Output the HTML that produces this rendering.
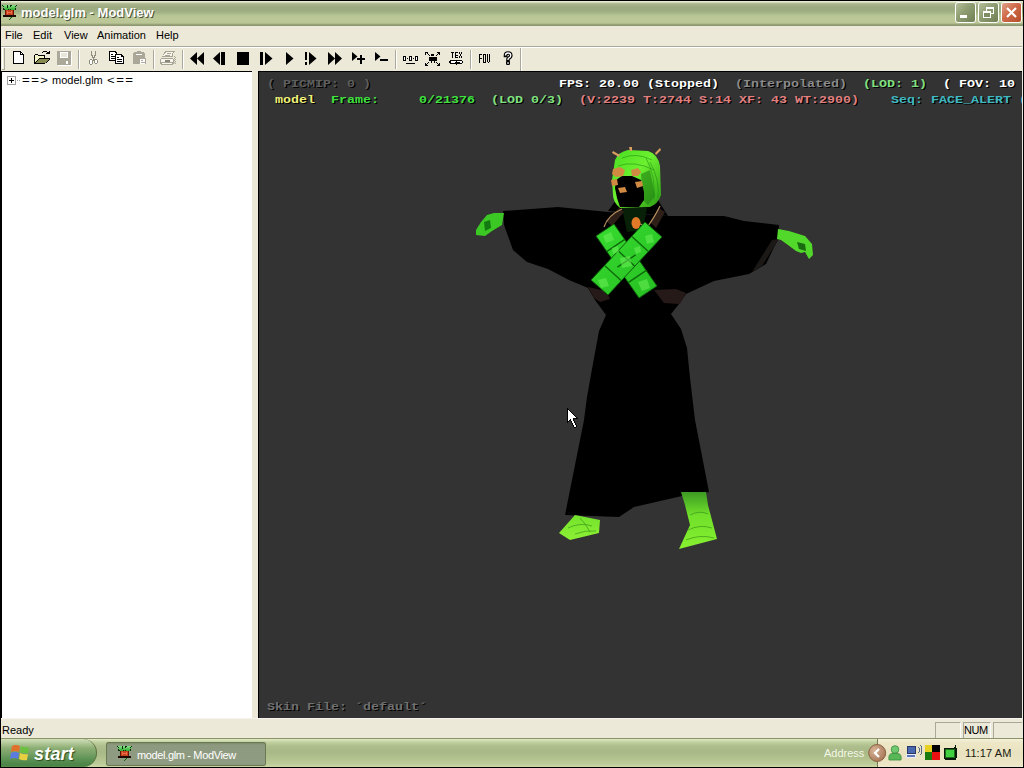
<!DOCTYPE html>
<html><head><meta charset="utf-8">
<style>
*{margin:0;padding:0;box-sizing:border-box}
html,body{width:1024px;height:768px;overflow:hidden;background:#000;position:relative;font-family:"Liberation Sans",sans-serif}
.a{position:absolute}
#title{left:1px;top:1px;width:1022px;height:25px;
 background:linear-gradient(to bottom,#e6edd0 0px,#e6edd0 1px,#bcc4a0 2px,#a9b48c 3px,#9eab81 6px,#9dac80 9px,#a5b587 12px,#b6c493 14px,#bcc898 18px,#bac696 22px,#a4ae84 23px,#8c9870 24px,#8c9870 25px)}
#ttext{left:21px;top:5px;font:bold 13px "Liberation Sans",sans-serif;color:#fff;text-shadow:1px 1px 0 #4a5238;white-space:nowrap}
.cb{top:2px;width:21px;height:21px;border:1px solid #fff;border-radius:3px;background:linear-gradient(135deg,#b4c09a 0%,#8e9c72 45%,#6f7e52 100%)}
#menu{left:1px;top:26px;width:1022px;height:20px;background:#ece9d8}
.mi{font-size:11px;color:#000;white-space:nowrap}
#tbar{left:1px;top:46px;width:1022px;height:25px;background:#ece9d8;border-top:1px solid #aca899}
#tbarhl{left:1px;top:47px;width:1022px;height:1px;background:#fff}
#tree{left:1px;top:71px;width:251px;height:647px;background:#fff;border-top:1px solid #000;border-left:1px solid #000}
#split{left:252px;top:71px;width:6px;height:647px;background:#ece9d8}
#view{left:258px;top:71px;width:764px;height:647px;background:#333;border-top:1px solid #000;border-left:1px solid #000}
#rcol{left:1022px;top:26px;width:1px;height:712px;background:#ece9d8}
#status{left:1px;top:718px;width:1022px;height:20px;background:#ece9d8}
#task{left:1px;top:738px;width:1023px;height:29px;background:linear-gradient(to bottom,#9aa672 0,#d6dcb8 1px,#c3cfa0 3px,#b8c592 8px,#b2c08c 20px,#a9b582 29px)}
.q{position:absolute;font:bold 11px "Liberation Mono",monospace;white-space:pre;transform-origin:0 0;transform:scaleX(1.212);text-shadow:1px 1px 0 #000}
</style></head><body>
<div id="title" class="a"></div>
<svg class="a" style="left:0;top:0" width="20" height="22" viewBox="0 0 20 22" shape-rendering="crispEdges">
<defs><linearGradient id="ig" x1="0" y1="0" x2="0" y2="1"><stop offset="0" stop-color="#8ae48a"/><stop offset="1" stop-color="#2aa82a"/></linearGradient></defs>
<path d="M2 5h15v2h-1v3h-12v-3h-2z" fill="url(#ig)"/>
<path d="M2 5h1v1h1v1h-1v-1h-1z M7 5h1v3h-1z M10 5h2v1h-1v1h-1z M16 5h1v1h-1v1h-1v-1h1z M3 8h1v2h-1z M4 9h1v1h-1z M8 9h1v1h-1z M10 9h1v1h-1z M15 8h1v2h-1z" fill="#0a2a0a"/>
<rect x="5" y="10" width="9" height="5" fill="#c8401c"/>
<path d="M5 10h1v5h-1z M13 10h1v5h-1z" fill="#6a1606"/>
<path d="M7 11h1v3h-1z M11 11h1v3h-1z M8 12h3v1h-3z" fill="#e8704a"/>
<rect x="3" y="15" width="13" height="2" fill="#1e0804"/>
<path d="M10 17h2v1h-1v1h-1v1h-1v-1h1z" fill="#1a5a1a"/>
<rect x="10" y="17" width="1" height="1" fill="#50c050"/>
</svg>
<div id="ttext" class="a">model.glm - ModView</div>
<div class="a cb" style="left:955px"><div class="a" style="left:4px;top:12px;width:7px;height:3px;background:#fff"></div></div>
<div class="a cb" style="left:978px"><div class="a" style="left:7px;top:4px;width:8px;height:7px;border:1px solid #fff;border-top-width:2px"></div><div class="a" style="left:4px;top:8px;width:8px;height:7px;border:1px solid #fff;border-top-width:2px;background:#7f8d62"></div></div>
<div class="a cb" style="left:1001px;background:linear-gradient(135deg,#e0a08a 0%,#cf6a48 45%,#b4502c 100%)">
<svg class="a" style="left:0;top:0" width="19" height="19" viewBox="0 0 19 19"><path d="M5 5L14 14M14 5L5 14" stroke="#fff" stroke-width="2.2"/></svg></div>
<div id="menu" class="a"></div>
<div class="a mi" style="left:5px;top:29px">File</div>
<div class="a mi" style="left:33px;top:29px">Edit</div>
<div class="a mi" style="left:64px;top:29px">View</div>
<div class="a mi" style="left:97px;top:29px">Animation</div>
<div class="a mi" style="left:156px;top:29px">Help</div>
<div id="tbar" class="a"></div>
<div id="tbarhl" class="a"></div>
<svg class="a" style="left:0;top:44px" width="540" height="28" viewBox="0 44 540 28" shape-rendering="crispEdges">
<!-- gripper -->
<rect x="2" y="48" width="1" height="22" fill="#fff"/>
<rect x="4" y="48" width="1" height="22" fill="#aca899"/>
<rect x="2" y="69" width="3" height="1" fill="#aca899"/>
<!-- new -->
<path d="M13 51H21L24 54V64H13Z" fill="#fff"/>
<path d="M13 51h8v1h-7v11h9v-9h1v10h-11z" fill="#000"/>
<path d="M20 51h1v1h1v1h1v1h1v1h-4z" fill="#000"/>
<rect x="21" y="53" width="1" height="1" fill="#fff"/>
<!-- open -->
<path d="M35 55h3v1h7v3h-6l-4 4z" fill="#f5f5c8"/>
<path d="M39 59h10l-4 4h-10z" fill="#878a50"/>
<path d="M34 55h1v8h10v1h-11z M35 54h3v1h-3z M38 55h7v1h-7z M44 56h1v3h-1z M39 58h11v1h-11z" fill="#000"/>
<path d="M38 59h1v1h-1z M37 60h1v1h-1z M36 61h1v1h-1z M35 62h1v1h-1z M49 59h1v1h-1z M48 60h1v1h-1z M47 61h1v1h-1z M46 62h1v1h-1z" fill="#000"/>
<path d="M42 52h1v1h-1z M43 51h4v1h-4z M47 52h1v1h-1z M46 53h4v1h-4z M48 52h2v1h-2z M49 51h1v1h-1z" fill="#000"/>
<!-- save disabled -->
<rect x="57" y="51" width="14" height="14" fill="#aca899"/>
<rect x="60" y="52" width="8" height="6" fill="#fff"/>
<rect x="61" y="53" width="6" height="4" fill="#e8e6d8"/>
<rect x="66" y="61" width="2" height="3" fill="#fff"/>
<rect x="71" y="52" width="1" height="13" fill="#fff"/>
<rect x="58" y="65" width="14" height="1" fill="#fff"/>
<!-- sep -->
<rect x="78" y="50" width="1" height="19" fill="#aca899"/><rect x="79" y="50" width="1" height="19" fill="#fff"/>
<!-- scissors disabled -->
<path d="M91 51h1v4h1v2h1v-2h1v-4h1v5h-1v2h-1v1h-1v-1h-1v-2h-1z" fill="#8f8c80"/>
<path d="M90 59h2v1h1v4h-1v1h-2v-1h-1v-4h1z M95 59h2v1h1v3h-1v1h-2v-1h-1v-3h1z" fill="#8f8c80"/>
<path d="M90 60h2v4h-2z M95 60h2v3h-2z" fill="#fff"/>
<rect x="93" y="59" width="2" height="2" fill="#8f8c80"/>
<!-- copy -->
<path d="M109 51h6l2 2v2h-2v6h-6z" fill="#000"/>
<path d="M110 52h5v1h1v2h-1v5h-5z" fill="#fff"/>
<path d="M111 54h2v1h-2z M111 56h4v1h-4z M111 58h4v1h-4z" fill="#000"/>
<path d="M115 54h6l3 3v7h-9z" fill="#000"/>
<path d="M116 55h5v1h1v1h1v6h-7z" fill="#fff"/>
<rect x="121" y="56" width="1" height="1" fill="#000"/>
<path d="M117 57h2v1h-2z M117 59h5v1h-5z M117 61h5v1h-5z" fill="#000"/>
<!-- paste disabled -->
<path d="M134 52h3v-1h4v1h3v1h1v11h-12v-11h1z" fill="#aca899"/>
<rect x="136" y="54" width="6" height="1" fill="#fff"/>
<path d="M139 58h6l1 1v5h-7z" fill="#aca899"/>
<rect x="140" y="59" width="5" height="5" fill="#fff"/>
<path d="M141 60h2v1h-2z M141 62h4v1h-4z" fill="#aca899"/>
<!-- sep -->
<rect x="153" y="50" width="1" height="19" fill="#aca899"/><rect x="154" y="50" width="1" height="19" fill="#fff"/>
<!-- printer disabled -->
<path d="M165 51h10v1h-1v1h-1v4h-11v-1h1v-2h1v-2h1z" fill="#a8a496"/>
<path d="M166 52h7v1h-1v3h-9v-1h1v-1h1v-1h1z" fill="#f6f5ee"/>
<path d="M167 53h4v1h-4z M165 55h5v1h-5z" fill="#a8a496"/>
<path d="M161 58h12v1h1v5h-1v1h-12v-1h-1v-5h1z" fill="#a8a496"/>
<path d="M161 59h12v1h-12z M161 60h4v2h-4z M170 60h3v2h-3z M162 63h10v1h-10z" fill="#f6f5ee"/>
<path d="M165 60h5v2h-5z" fill="#8a8676"/>
<path d="M174 56h1v1h-1z M175 57h1v1h-1z M174 58h1v1h-1z M175 59h1v1h-1z M174 60h1v1h-1z M175 61h1v1h-1z M174 62h1v1h-1z M175 63h1v1h-1z" fill="#a8a496"/>
<!-- sep -->
<rect x="182" y="50" width="1" height="19" fill="#aca899"/><rect x="183" y="50" width="1" height="19" fill="#fff"/>
<!-- rewind -->
<path d="M190 58.5L197 52V65Z M197 58.5L204 52V65Z" fill="#000" shape-rendering="auto"/>
<!-- step back -->
<path d="M213 58.5L220 52V65Z" fill="#000" shape-rendering="auto"/>
<rect x="221" y="52" width="4" height="13" fill="#000"/>
<!-- stop -->
<rect x="237" y="52" width="12" height="13" fill="#000"/>
<!-- step fwd -->
<rect x="260" y="52" width="3" height="13" fill="#000"/>
<path d="M265 52L272.5 58.5L265 65Z" fill="#000" shape-rendering="auto"/>
<!-- play -->
<path d="M286 52L293.5 58.5L286 65Z" fill="#000" shape-rendering="auto"/>
<!-- !play -->
<rect x="305" y="52" width="2" height="8" fill="#000"/><rect x="305" y="62" width="2" height="3" fill="#000"/>
<path d="M309 52L316.5 58.5L309 65Z" fill="#000" shape-rendering="auto"/>
<!-- ffwd -->
<path d="M328 52L335 58.5L328 65Z M335 52L342 58.5L335 65Z" fill="#000" shape-rendering="auto"/>
<!-- play+ -->
<path d="M352 52L357.5 56.5L352 61Z" fill="#000" shape-rendering="auto"/>
<rect x="357" y="58" width="8" height="2" fill="#000"/><rect x="360" y="55" width="2" height="9" fill="#000"/>
<!-- play- -->
<path d="M375 52L380.5 56.5L375 61Z" fill="#000" shape-rendering="auto"/>
<rect x="380" y="59" width="8" height="2" fill="#000"/>
<!-- sep -->
<rect x="395" y="50" width="1" height="19" fill="#aca899"/><rect x="396" y="50" width="1" height="19" fill="#fff"/>
<!-- 0.0.0 -->
<path d="M403 56h3v5h-3z M409 56h3v5h-3z M415 56h3v5h-3z" fill="#000"/>
<path d="M404 57h1v3h-1z M410 57h1v3h-1z M416 57h1v3h-1z" fill="#fff"/>
<rect x="407" y="58" width="1" height="1" fill="#000"/><rect x="413" y="58" width="1" height="1" fill="#000"/>
<rect x="406" y="63" width="9" height="1" fill="#000"/>
<!-- person arrows -->
<path d="M431 54h3v2h-3z M429 57h8v2h-8z M429 59h2v2h-2z M435 59h2v2h-2z M431 59h4v2h-4z M431 61h1v2h-1z M434 61h1v2h-1z" fill="#000"/>
<path d="M425 52h3v1h-2v2h-1z M427 53h1v1h1v1h1v1h-1v-1h-1v-1h-1z" fill="#000"/>
<path d="M437 52h3v3h-1v-2h-2z M438 53h1v1h-1v1h-1v1h-1v-1h1v-1h1z" fill="#000"/>
<path d="M425 63h1v2h2v1h-3z M428 62h1v1h-1v1h-1v1h-1v-1h1v-1h1z" fill="#000"/>
<path d="M439 63h1v3h-3v-1h2z M436 62h1v1h1v1h1v1h-1v-1h-1v-1h-1z" fill="#000"/>
<!-- TEX -->
<path d="M451 52h3v1h-1v5h-1v-5h-1z M455 52h3v1h-2v2h2v1h-2v1h2v1h-3z M459 52h1v2h1v1h-1v-1h-1z M461 52h1v2h-1z M460 54h1v2h-1z M459 56h1v2h-1z M461 56h1v2h-1z" fill="#000"/>
<path d="M450 60h12v1h1v2h-1v1h-12v-1h-1v-2h1z" fill="#000"/>
<path d="M451 61h11v2h-11z" fill="#fff"/>
<path d="M455 62h5v1h-5z M456 61h1v4h-1z M455 62h1v2h-1z" fill="#000"/>
<!-- sep -->
<rect x="470" y="50" width="1" height="19" fill="#aca899"/><rect x="471" y="50" width="1" height="19" fill="#fff"/>
<!-- FOV -->
<path d="M479 54h3v1h-2v3h2v1h-2v4h-1z M483 54h3v9h-3z M487 54h1v8h1v-8h1v8h-1v1h-1v-1h-1z" fill="#000"/>
<rect x="484" y="55" width="1" height="7" fill="#ecebdd"/>
<!-- ? -->
<g shape-rendering="auto" fill="none">
<path d="M505.5 55.5Q505.5 53 508 53Q510.8 53 510.8 55.5Q510.8 57.2 508.6 58.2L508 59V60" stroke="#000" stroke-width="3.6" stroke-linecap="square"/>
<rect x="506" y="61" width="4" height="4" rx="1.2" fill="#000"/>
<path d="M505.5 55.5Q505.5 53 508 53Q510.8 53 510.8 55.5Q510.8 57.2 508.6 58.2L508 59V60" stroke="#fff" stroke-width="1.3"/>
<rect x="507.3" y="62.3" width="1.5" height="1.5" fill="#fff"/>
</g>
<!-- end -->
<rect x="520" y="48" width="1" height="23" fill="#aca899"/><rect x="521" y="48" width="1" height="23" fill="#fff"/>
</svg>

<div id="tree" class="a"></div>
<svg class="a" style="left:7px;top:76px" width="16" height="9" viewBox="0 0 16 9" shape-rendering="crispEdges">
<rect x="0.5" y="0.5" width="8" height="8" fill="#fff" stroke="#a0a0a0"/>
<rect x="2" y="4" width="5" height="1" fill="#000"/><rect x="4" y="2" width="1" height="5" fill="#000"/>
<rect x="10" y="4" width="1" height="1" fill="#a0a0a0"/><rect x="12" y="4" width="1" height="1" fill="#a0a0a0"/>
</svg>
<div class="a mi" style="left:22px;top:74px;letter-spacing:1.2px;transform:scaleX(1.2);transform-origin:0 0">==&gt;</div><div class="a mi" style="left:52px;top:74px;letter-spacing:0px">model.glm</div><div class="a mi" style="left:107px;top:74px;letter-spacing:1.2px;transform:scaleX(1.2);transform-origin:0 0">&lt;==</div>
<div id="split" class="a"></div>
<div id="view" class="a"></div>
<div class="q" style="left:267px;top:78px;color:#5e5e5e">( PICMIP: 0 )</div>
<div class="q" style="left:559px;top:78px;color:#fff">FPS: 20.00 (Stopped)</div>
<div class="q" style="left:735px;top:78px;color:#8a8a8a">(Interpolated)</div>
<div class="q" style="left:863px;top:78px;color:#80e080">(LOD: 1)</div>
<div class="q" style="left:943px;top:78px;color:#fff">( FOV: 10</div>
<div class="q" style="left:275px;top:94px;color:#f0f078">model</div>
<div class="q" style="left:331px;top:94px;color:#40e040">Frame:</div>
<div class="q" style="left:419px;top:94px;color:#40e040">0/21376</div>
<div class="q" style="left:491px;top:94px;color:#80e080">(LOD 0/3)</div>
<div class="q" style="left:579px;top:94px;color:#e08080">(V:2239 T:2744 S:14 XF: 43 WT:2900)</div>
<div class="q" style="left:891px;top:94px;color:#40b8c0">Seq: FACE_ALERT</div>
<div class="q" style="left:1019px;top:94px;color:#40b8c0">(</div>
<div class="q" style="left:267px;top:701px;color:#707070">Skin File: &#180;default&#180;</div>
<svg class="a" style="left:0;top:0" width="1024" height="768" viewBox="0 0 1024 768">
<defs>
<linearGradient id="gh" x1="0" y1="0" x2="1" y2="1"><stop offset="0" stop-color="#48dc20"/><stop offset="0.45" stop-color="#6cf030"/><stop offset="1" stop-color="#2a9a14"/></linearGradient>
<linearGradient id="gf" x1="0" y1="0" x2="0" y2="1"><stop offset="0" stop-color="#3c9a24"/><stop offset="0.4" stop-color="#70e02a"/><stop offset="1" stop-color="#88f030"/></linearGradient><linearGradient id="gf2" x1="0" y1="0" x2="0" y2="1"><stop offset="0" stop-color="#74e22c"/><stop offset="1" stop-color="#8cf034"/></linearGradient>
<linearGradient id="gs" x1="0" y1="0" x2="1" y2="1"><stop offset="0" stop-color="#38dc30"/><stop offset="1" stop-color="#26be22"/></linearGradient>
</defs>
<!-- robe + sleeves -->
<path d="M503 211L558 207L608 212L640 214L666 216L724 216L744 221L779 225L778 239L766 264L749 274L714 281L686 294L679 304L671 314L681 329L687 348L690 378L695 420L709 492L682 496L634 507L619 517L565 515L584 420L587 397L594 358L599 331L606 315L595 300L588 288L569 280L548 269L527 262L513 250L504 225Z" fill="#000"/>
<!-- forearm right dark -->
<path d="M772 240L779 239L762 266L752 272Z" fill="#1c1816"/>
<!-- belt brown -->
<path d="M588 287L606 291L610 299L600 302L594 298Z" fill="#261a18"/>
<path d="M654 290L676 289L686 293L680 304L664 303Z" fill="#261a18"/>
<!-- neck black -->
<path d="M616 200L658 200L668 216L608 211Z" fill="#000"/>
<path d="M622 208L647 208L643 230L627 232Z" fill="#082008"/>
<!-- shoulder brown -->
<path d="M606 221L619 208L624 212L612 226Z" fill="#2e2018"/>
<path d="M650 222L659 208L665 212L656 228Z" fill="#2e2018"/>
<!-- necklace cord -->
<path d="M604 227Q608 215 622 209" stroke="#b89060" stroke-width="1.2" fill="none"/>
<path d="M660 206Q654 218 648 226L640 224" stroke="#b89060" stroke-width="1.2" fill="none"/>
<!-- bandolier straps -->
<path d="M596 236L614 224L657 286L639 298Z" fill="url(#gs)" stroke="#0e5a0c" stroke-width="1"/>
<path d="M645 222L662 237L608 295L591 280Z" fill="url(#gs)" stroke="#0e5a0c" stroke-width="1"/>
<path d="M606.7 251.7L624.8 239.3 M617.4 267.2L635.6 254.8 M628.2 282.7L646.3 270.3 M631.9 236.5L648.1 251.3 M618.4 251.1L634.6 265.9 M604.9 265.7L621.1 280.5" stroke="#0c6a0a" stroke-width="1.4"/>
<path d="M603 236L611 232L614 240L606 243Z M645 236L652 234L654 242L647 244Z M620 258L630 256L632 266L622 268Z M598 280L606 278L609 286L601 288Z M638 282L647 279L650 288L642 291Z M612 248L618 246L619 252L613 254Z M634 248L640 246L641 252L636 254Z" fill="#6cf058" opacity="0.55"/>
<!-- pendant -->
<ellipse cx="636" cy="223" rx="4.5" ry="6" fill="#e07a28"/>
<!-- hands -->
<path d="M504 213L502 225L492 231L485 236L476 235L476 230L481 222L487 215L494 213Z" fill="#3cc824"/>
<path d="M484 222L490 220L491 228L485 231Z" fill="#127a10"/>
<path d="M778 229L789 231L805 236L812 244L813 255L809 259L805 252L801 253L796 251L788 245L781 240L777 239Z" fill="#52d82a"/>
<path d="M797 242L805 244L806 251L799 249Z" fill="#1a6a12"/>
<!-- feet -->
<path d="M575 515L600 520L599 533L570 540L559 533Z" fill="url(#gf2)"/>
<path d="M568 528Q580 522 592 526 M575 534Q585 530 596 531 M580 518Q586 524 590 532" stroke="#3a9a18" stroke-width="1" fill="none" opacity="0.7"/>
<path d="M681 492L706 492L708 505L717 539L679 549L690 525L685 505Z" fill="url(#gf)"/>
<path d="M690 515Q700 510 708 514 M688 530Q700 524 712 528 M686 540Q700 534 714 538" stroke="#2e8a14" stroke-width="1" fill="none" opacity="0.6"/>
<!-- head hood -->
<path d="M615 160Q618 152 628 150L648 151Q658 154 660 166L661 195Q658 204 650 207L620 208Q613 202 613 195L612 180Z" fill="url(#gh)"/>
<path d="M641 174L650 170L655 196L648 205L643 200Z" fill="#1c7a12" opacity="0.55"/>
<path d="M622 158Q636 152 652 160 M618 166Q634 160 654 170 M646 158Q656 176 654 200 M650 162Q660 180 658 198" stroke="#1e8a12" stroke-width="1" fill="none" opacity="0.55"/>
<!-- face -->
<path d="M616 180L622 176L632 176L641 180L644 192L644 200L639 207L620 207L617 198L615 188Z" fill="#000"/>
<!-- eyes / features -->
<path d="M613 169L620 167L625 170L623 176L616 177L612 174Z M631 170L638 168L641 172L638 176L632 176Z M611 180L617 179L618 185L612 186Z M635 182L642 181L643 186L637 188Z M618 188L625 187L627 192L620 193Z" fill="#d08a42"/>
<!-- spikes -->
<path d="M613 151L620 155L619 157L612 153Z M629 147L632 147L632 151L630 151Z M660 148L661 150L656 155L655 153Z" fill="#d8a060"/>
<!-- cursor -->
<g shape-rendering="crispEdges"><path d="M568 410h1v1h-1z M568 411h1v1h-1z M569 411h1v1h-1z M568 412h1v1h-1z M569 412h1v1h-1z M570 412h1v1h-1z M568 413h1v1h-1z M569 413h1v1h-1z M570 413h1v1h-1z M571 413h1v1h-1z M568 414h1v1h-1z M569 414h1v1h-1z M570 414h1v1h-1z M571 414h1v1h-1z M572 414h1v1h-1z M568 415h1v1h-1z M569 415h1v1h-1z M570 415h1v1h-1z M571 415h1v1h-1z M572 415h1v1h-1z M573 415h1v1h-1z M568 416h1v1h-1z M569 416h1v1h-1z M570 416h1v1h-1z M571 416h1v1h-1z M572 416h1v1h-1z M573 416h1v1h-1z M574 416h1v1h-1z M568 417h1v1h-1z M569 417h1v1h-1z M570 417h1v1h-1z M571 417h1v1h-1z M572 417h1v1h-1z M573 417h1v1h-1z M574 417h1v1h-1z M575 417h1v1h-1z M568 418h1v1h-1z M569 418h1v1h-1z M570 418h1v1h-1z M571 418h1v1h-1z M572 418h1v1h-1z M568 419h1v1h-1z M569 419h1v1h-1z M571 419h1v1h-1z M572 419h1v1h-1z M568 420h1v1h-1z M571 420h1v1h-1z M572 420h1v1h-1z M572 421h1v1h-1z M573 421h1v1h-1z M572 422h1v1h-1z M573 422h1v1h-1z M573 423h1v1h-1z M574 423h1v1h-1z M573 424h1v1h-1z M574 424h1v1h-1z M574 425h1v1h-1z M575 425h1v1h-1z M574 426h1v1h-1z M575 426h1v1h-1z" fill="#fff"/><path d="M567 408h1v1h-1z M567 409h1v1h-1z M568 409h1v1h-1z M567 410h1v1h-1z M569 410h1v1h-1z M567 411h1v1h-1z M570 411h1v1h-1z M567 412h1v1h-1z M571 412h1v1h-1z M567 413h1v1h-1z M572 413h1v1h-1z M567 414h1v1h-1z M573 414h1v1h-1z M567 415h1v1h-1z M574 415h1v1h-1z M567 416h1v1h-1z M575 416h1v1h-1z M567 417h1v1h-1z M576 417h1v1h-1z M567 418h1v1h-1z M573 418h1v1h-1z M574 418h1v1h-1z M575 418h1v1h-1z M576 418h1v1h-1z M577 418h1v1h-1z M567 419h1v1h-1z M570 419h1v1h-1z M573 419h1v1h-1z M567 420h1v1h-1z M569 420h1v1h-1z M570 420h1v1h-1z M573 420h1v1h-1z M567 421h1v1h-1z M568 421h1v1h-1z M571 421h1v1h-1z M574 421h1v1h-1z M567 422h1v1h-1z M571 422h1v1h-1z M574 422h1v1h-1z M572 423h1v1h-1z M575 423h1v1h-1z M572 424h1v1h-1z M575 424h1v1h-1z M573 425h1v1h-1z M576 425h1v1h-1z M573 426h1v1h-1z M576 426h1v1h-1z M574 427h1v1h-1z M575 427h1v1h-1z" fill="#000"/></g>
</svg>

<div id="rcol" class="a"></div>
<div id="status" class="a"></div>
<div class="a" style="left:1px;top:718px;width:1021px;height:1px;background:#f4f3ee"></div>
<div class="a mi" style="left:2px;top:724px">Ready</div>
<div class="a" style="left:935px;top:722px;width:26px;height:16px;border-top:1px solid #aca899;border-left:1px solid #aca899;border-right:1px solid #fff"></div>
<div class="a" style="left:963px;top:722px;width:28px;height:16px;border-top:1px solid #aca899;border-left:1px solid #aca899;border-right:1px solid #fff"></div>
<div class="a mi" style="left:964px;top:724px;letter-spacing:-0.4px">NUM</div>
<div class="a" style="left:993px;top:722px;width:29px;height:16px;border-top:1px solid #aca899;border-left:1px solid #aca899"></div>
<div class="a" style="left:1px;top:738px;width:1022px;height:29px;background:linear-gradient(to bottom,#8a9468 0,#8a9468 1px,#e2eac6 1px,#d6e0b6 2px,#c4d2a2 4px,#aebe8c 8px,#a8b887 14px,#b2c28e 20px,#bccb98 26px,#c8d6a4 28px,#c8d6a4 29px)"></div>
<!-- start button -->
<div class="a" style="left:1px;top:739px;width:96px;height:28px;border-radius:0 14px 14px 0/0 14px 14px 0;border-right:1px solid #56703e;background:linear-gradient(to bottom,#d2dfba 0,#b4c99a 4px,#8cae74 9px,#7aa268 14px,#5e9255 20px,#4a8446 26px,#5a8a50 28px)"></div>
<svg class="a" style="left:9px;top:743px" width="22" height="19" viewBox="0 0 22 19">
<path d="M3 3Q7 1 11 3L10 9Q6 7 2 9Z" fill="#e0702c"/>
<path d="M12 3Q16 5 20 4L19 10Q15 11 11 9Z" fill="#6cc040"/>
<path d="M2 10Q6 8 10 10L9 16Q5 14 1 16Z" fill="#5a7ce0"/>
<path d="M11 10Q15 12 19 11L18 17Q14 18 10 16Z" fill="#e8d040"/>
</svg>
<div class="a" style="left:34px;top:744px;font:italic bold 18px 'Liberation Sans',sans-serif;color:#fff;text-shadow:1px 1px 1px #2a4a20;letter-spacing:0.2px">start</div>
<!-- task button -->
<div class="a" style="left:106px;top:742px;width:160px;height:24px;border:1px solid #6c7852;border-radius:2px;background:linear-gradient(to bottom,#7e8a6a 0,#8e9a80 2px,#909c82 20px,#8a9678 24px)"></div>
<svg class="a" style="left:115px;top:743px" width="20" height="22" viewBox="0 0 20 22" shape-rendering="crispEdges">
<defs><linearGradient id="ig2" x1="0" y1="0" x2="0" y2="1"><stop offset="0" stop-color="#8ae48a"/><stop offset="1" stop-color="#2aa82a"/></linearGradient></defs>
<path d="M2 3h15v2h-1v3h-12v-3h-2z" fill="url(#ig2)"/>
<path d="M2 3h1v1h1v1h-1v-1h-1z M7 3h1v3h-1z M10 3h2v1h-1v1h-1z M16 3h1v1h-1v1h-1v-1h1z M3 6h1v2h-1z M4 7h1v1h-1z M8 7h1v1h-1z M10 7h1v1h-1z M15 6h1v2h-1z" fill="#0a2a0a"/>
<rect x="5" y="8" width="9" height="5" fill="#c8401c"/>
<path d="M5 8h1v5h-1z M13 8h1v5h-1z" fill="#6a1606"/>
<path d="M7 9h1v3h-1z M11 9h1v3h-1z M8 10h3v1h-3z" fill="#e8704a"/>
<rect x="3" y="13" width="13" height="2" fill="#1e0804"/>
<path d="M10 15h2v1h-1v1h-1v1h-1v-1h1z" fill="#1a5a1a"/>
<rect x="10" y="15" width="1" height="1" fill="#50c050"/>
</svg>
<div class="a" style="left:137px;top:749px;font-size:11px;color:#fff;white-space:nowrap;letter-spacing:-0.35px">model.glm - ModView</div>
<!-- address -->
<div class="a" style="left:824px;top:747px;font-size:11px;color:#f4f8e8;white-space:nowrap">Address</div>
<!-- tray -->
<div class="a" style="left:877px;top:739px;width:146px;height:28px;border-left:1px solid #7a7a58;background:linear-gradient(to bottom,#f6f2dc 0,#eee8c8 3px,#e8e2c0 14px,#ece6c6 25px,#f0ead0 28px)"></div>
<svg class="a" style="left:868px;top:744px" width="19" height="19" viewBox="0 0 19 19">
<defs><radialGradient id="cg" cx="0.35" cy="0.35" r="0.7"><stop offset="0" stop-color="#d8b496"/><stop offset="1" stop-color="#a87658"/></radialGradient></defs>
<circle cx="9.2" cy="9" r="8.5" fill="url(#cg)" stroke="#8a6440" stroke-width="1"/>
<path d="M11 5L7 9L11 13" stroke="#fff" stroke-width="2.2" fill="none"/>
</svg>
<svg class="a" style="left:888px;top:745px" width="14" height="16" viewBox="0 0 14 16">
<circle cx="7" cy="4.5" r="3.8" fill="#70c870" stroke="#3a8a3a" stroke-width="0.8"/>
<path d="M1 15Q0 9 4 8.5L10 8.5Q14 9 13 15Z" fill="#58b858" stroke="#3a8a3a" stroke-width="0.8"/>
</svg>
<svg class="a" style="left:905px;top:744px" width="18" height="16" viewBox="0 0 18 16" shape-rendering="crispEdges">
<rect x="2" y="2" width="9" height="8" fill="#28386a"/>
<rect x="3" y="3" width="7" height="6" fill="#4a68b0"/>
<rect x="1" y="10" width="10" height="4" fill="#e8ecf8"/>
<rect x="2" y="11" width="8" height="2" fill="#6078b8"/>
<path d="M13 3h1v1h1v4h-1v1h-1v-1h1v-4h-1z M15 1h1v1h1v8h-1v1h-1v-1h1v-8h-1z" fill="#5a6a8a"/>
</svg>
<svg class="a" style="left:925px;top:745px" width="15" height="15" viewBox="0 0 15 15" shape-rendering="crispEdges">
<rect x="0" y="0" width="7" height="7" fill="#e8d020"/>
<rect x="7" y="0" width="8" height="7" fill="#000"/>
<rect x="0" y="7" width="7" height="8" fill="#1a7a10"/>
<rect x="7" y="7" width="8" height="8" fill="#e81010"/>
</svg>
<svg class="a" style="left:943px;top:745px" width="15" height="16" viewBox="0 0 15 16" shape-rendering="crispEdges">
<path d="M1 3h10v-1h1v-2h1v3h1v10h-1v2h-11v-1h-1z" fill="#0a1a0a"/>
<rect x="2" y="4" width="10" height="9" fill="#1a6a1a"/>
<rect x="3" y="5" width="8" height="7" fill="#40d040"/>
</svg>
<div class="a" style="left:965px;top:747px;font-size:11px;color:#1a1a10;white-space:nowrap;letter-spacing:0.1px">11:17 AM</div>


<div class="a" style="left:1023px;top:0;width:1px;height:768px;background:#000"></div>
</body></html>
